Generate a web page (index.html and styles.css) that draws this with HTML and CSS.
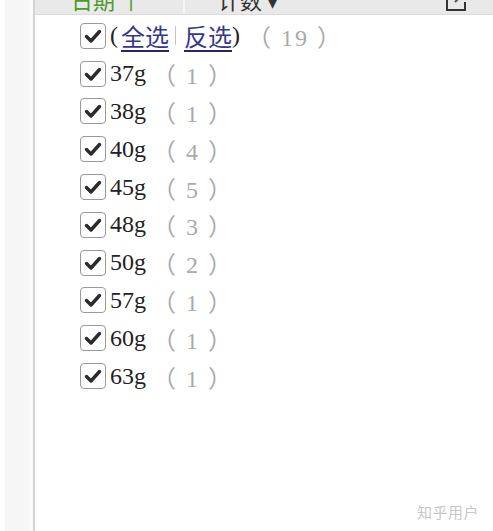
FILE: index.html
```html
<!DOCTYPE html>
<html>
<head>
<meta charset="utf-8">
<link rel="stylesheet" href="styles.css">
</head>
<body>
<div class="page">
  <div class="rail"><div class="rail-inner"></div></div>
  <div class="panel">
    <div class="header">
      <div class="col col-date"><span class="htext green">日期 ↑</span></div>
      <div class="col col-count"><span class="htext">计数 ▾</span></div>
      <div class="col col-icon">
        <svg class="hicon" viewBox="0 0 26 26" width="26" height="26"><path d="M13 3 H4 V22 H22 V14" fill="none" stroke="#333" stroke-width="2"/><path d="M12 14 L23 3 M17 3 H23 V9" fill="none" stroke="#555" stroke-width="2"/></svg>
      </div>
    </div>
    <ul class="list">
      <li class="row"><span class="cb"><svg viewBox="0 0 26 26" width="26" height="26"><path d="M6.5 13.5 L11 18 L19.5 8.5" fill="none" stroke="#2b2b2b" stroke-width="3.4" stroke-linecap="round" stroke-linejoin="round"/></svg></span><span class="label">(<a class="lnk">全选</a><span class="sep"></span><a class="lnk">反选</a>)</span><span class="count wide">（ 19 ）</span></li>
      <li class="row"><span class="cb"><svg viewBox="0 0 26 26" width="26" height="26"><path d="M6.5 13.5 L11 18 L19.5 8.5" fill="none" stroke="#2b2b2b" stroke-width="3.4" stroke-linecap="round" stroke-linejoin="round"/></svg></span><span class="label">37g</span><span class="count">（ 1 ）</span></li>
      <li class="row"><span class="cb"><svg viewBox="0 0 26 26" width="26" height="26"><path d="M6.5 13.5 L11 18 L19.5 8.5" fill="none" stroke="#2b2b2b" stroke-width="3.4" stroke-linecap="round" stroke-linejoin="round"/></svg></span><span class="label">38g</span><span class="count">（ 1 ）</span></li>
      <li class="row"><span class="cb"><svg viewBox="0 0 26 26" width="26" height="26"><path d="M6.5 13.5 L11 18 L19.5 8.5" fill="none" stroke="#2b2b2b" stroke-width="3.4" stroke-linecap="round" stroke-linejoin="round"/></svg></span><span class="label">40g</span><span class="count">（ 4 ）</span></li>
      <li class="row"><span class="cb"><svg viewBox="0 0 26 26" width="26" height="26"><path d="M6.5 13.5 L11 18 L19.5 8.5" fill="none" stroke="#2b2b2b" stroke-width="3.4" stroke-linecap="round" stroke-linejoin="round"/></svg></span><span class="label">45g</span><span class="count">（ 5 ）</span></li>
      <li class="row"><span class="cb"><svg viewBox="0 0 26 26" width="26" height="26"><path d="M6.5 13.5 L11 18 L19.5 8.5" fill="none" stroke="#2b2b2b" stroke-width="3.4" stroke-linecap="round" stroke-linejoin="round"/></svg></span><span class="label">48g</span><span class="count">（ 3 ）</span></li>
      <li class="row"><span class="cb"><svg viewBox="0 0 26 26" width="26" height="26"><path d="M6.5 13.5 L11 18 L19.5 8.5" fill="none" stroke="#2b2b2b" stroke-width="3.4" stroke-linecap="round" stroke-linejoin="round"/></svg></span><span class="label">50g</span><span class="count">（ 2 ）</span></li>
      <li class="row"><span class="cb"><svg viewBox="0 0 26 26" width="26" height="26"><path d="M6.5 13.5 L11 18 L19.5 8.5" fill="none" stroke="#2b2b2b" stroke-width="3.4" stroke-linecap="round" stroke-linejoin="round"/></svg></span><span class="label">57g</span><span class="count">（ 1 ）</span></li>
      <li class="row"><span class="cb"><svg viewBox="0 0 26 26" width="26" height="26"><path d="M6.5 13.5 L11 18 L19.5 8.5" fill="none" stroke="#2b2b2b" stroke-width="3.4" stroke-linecap="round" stroke-linejoin="round"/></svg></span><span class="label">60g</span><span class="count">（ 1 ）</span></li>
      <li class="row"><span class="cb"><svg viewBox="0 0 26 26" width="26" height="26"><path d="M6.5 13.5 L11 18 L19.5 8.5" fill="none" stroke="#2b2b2b" stroke-width="3.4" stroke-linecap="round" stroke-linejoin="round"/></svg></span><span class="label">63g</span><span class="count">（ 1 ）</span></li>
    </ul>
    <div class="watermark">知乎用户</div>
  </div>
</div>
</body>
</html>
```
FILE: styles.css
```css
* { box-sizing: border-box; }
html, body { margin: 0; padding: 0; background: #fff; }
body { width: 493px; height: 531px; overflow: hidden; font-family: "Liberation Serif", "Noto Sans CJK SC", serif; }
.page { display: flex; height: 531px; }
.rail { width: 35px; padding-left: 5px; background: #fff; display: flex; }
.rail-inner { flex: 1; background: #f6f6f6; border-right: 2px solid #d4d4d4; box-shadow: inset -4px 0 0 #fafafa; }
.panel { flex: 1; display: flex; flex-direction: column; position: relative; }
.header { height: 15px; background: #e9e9e9; border-bottom: 1px solid #dcdcdc; display: flex; overflow: hidden; }
.col { display: flex; align-items: flex-end; overflow: hidden; }
.col-date { width: 150px; border-right: 2px solid #f4f4f4; padding-left: 36px; }
.col-count { flex: 1; padding-left: 33px; }
.col-icon { width: 60px; padding-left: 10px; }
.htext { font-family: "Noto Sans CJK SC", sans-serif; font-size: 22px; line-height: 22px; margin-bottom: 4px; color: #333; white-space: nowrap; }
.htext.green { color: #4f9a2a; }
.hicon { display: block; flex: none; margin-bottom: 0; }
.list { list-style: none; margin: 0; padding: 2px 0 0 45px; }
.row { display: flex; align-items: center; height: 37.8px; font-size: 24px; color: #222; }
.cb { flex: none; width: 26px; height: 26px; border: 1.5px solid #999; border-radius: 4px; background: #fff; display: flex; align-items: center; justify-content: center; margin-right: 4px; }
.cb svg { display: block; margin: -1.5px; }
.label { white-space: nowrap; display: flex; align-items: center; }
.lnk { color: #35388a; text-decoration: underline; text-decoration-color: #2a2470; text-decoration-thickness: 2px; text-underline-offset: 4px; margin: 0 0 0 3px; }
.sep { display: inline-block; width: 1px; height: 19px; background: #c4c4c4; margin: 0 5px 0 6px; }
.count { color: #aaa; margin-left: 6px; white-space: pre; letter-spacing: 2px; }
.count.wide { margin-left: 7px; }
.watermark { position: absolute; right: 14px; bottom: 9px; font-family: "Noto Sans CJK SC", sans-serif; font-size: 15px; color: #c8c8c8; letter-spacing: 0.5px; }
```
